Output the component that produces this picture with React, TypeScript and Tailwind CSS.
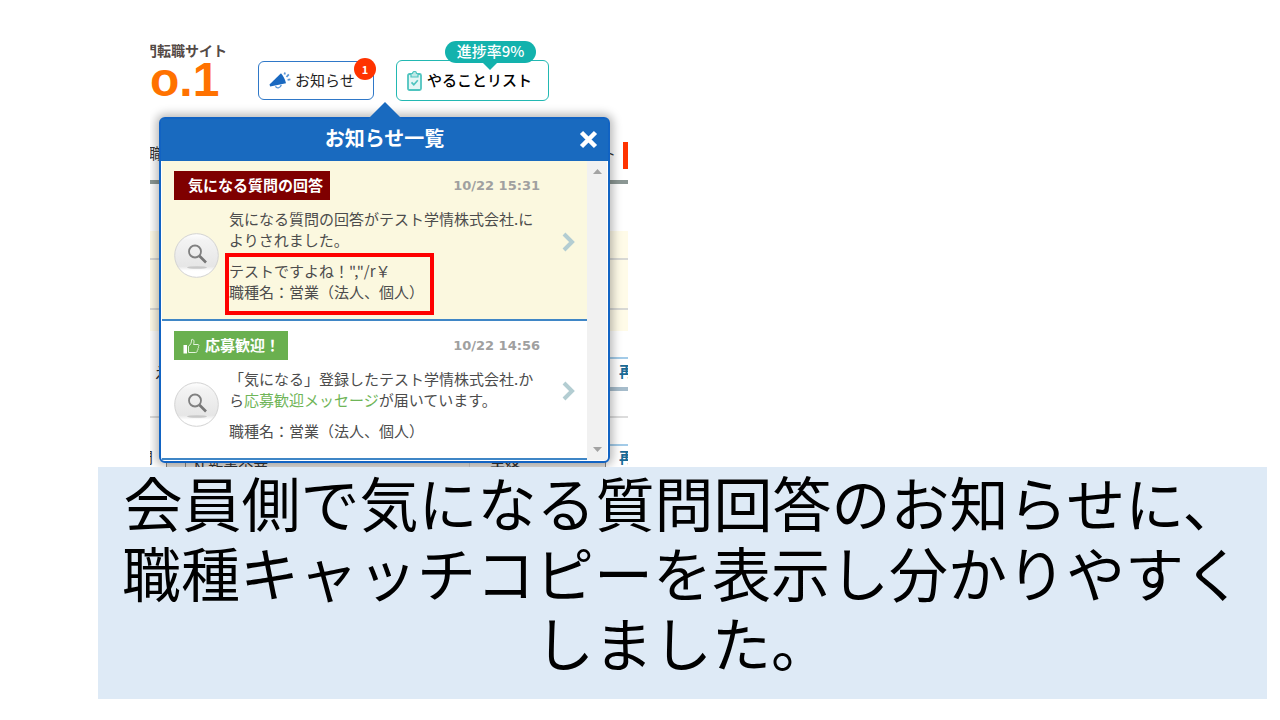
import type { ReactNode } from 'react';

function MegaphoneIcon() {
  return (
    <svg width="22" height="18" viewBox="0 0 22 18" fill="none" aria-hidden="true">
      <path d="M0.500 12.600 12 1.200c2 2.200 4.300 6.200 5 10L1.200 14.600z" fill="#1968c0" />
      <path d="M6.500 14.200c1 2.400 4.800 2.400 5.800-1.300" stroke="#5a95d6" strokeWidth="1.400" />
      <path
        d="M15.500 2.500 16 0.500M17.500 5l2.300-2.600M18.600 7.800l2.800-.5"
        stroke="#5a95d6"
        strokeWidth="1.800"
      />
    </svg>
  );
}

function ClipboardIcon() {
  return (
    <svg width="15" height="20" viewBox="0 0 15 20" fill="none" aria-hidden="true">
      <rect x="1" y="3" width="13" height="16" rx="1.500" fill="#e4f6f5" stroke="#4fc4bf" strokeWidth="1.800" />
      <path d="M4 2.500h1.500a2 2 0 0 1 4 0H11v3.500H4z" fill="#bfe9e7" stroke="#4fc4bf" strokeWidth="1.200" />
      <path d="m4.500 11.300 2.300 2.400 4-4.400" stroke="#4fc4bf" strokeWidth="1.700" />
    </svg>
  );
}

function ThumbIcon() {
  return (
    <svg width="17" height="16" viewBox="0 0 17 16" fill="none" aria-hidden="true">
      <rect x="0.500" y="7" width="3.500" height="8.500" fill="#fff" />
      <path
        d="M5.500 14.500V8.200c2-1.200 3-3.200 3.200-6.700 2.200-.6 2.900 1.600 1.800 5h4.700c1 .4 1 1.700.1 2.200.5.7.3 1.500-.5 1.900.4.800.1 1.500-.6 1.900.2 1.200-.4 2-1.500 2z"
        stroke="#e3f3dd"
      />
    </svg>
  );
}

function SearchBall() {
  return (
    <svg className="shrink-0" width="45" height="45" viewBox="0 0 45 45" fill="none" aria-hidden="true">
      <defs>
        <linearGradient id="ball" x1="0" y1="0" x2="0" y2="1">
          <stop offset="0" stopColor="#fff" />
          <stop offset="0.150" stopColor="#f3f3f3" />
          <stop offset="0.750" stopColor="#e6e6e6" />
          <stop offset="0.850" stopColor="#fff" />
        </linearGradient>
      </defs>
      <circle cx="22.500" cy="22.500" r="21.800" fill="url(#ball)" stroke="#d3d3d3" />
      <ellipse cx="23" cy="34.500" rx="10" ry="1.300" fill="#c8c8c8" />
      <circle cx="21" cy="18.500" r="6" stroke="#808080" strokeWidth="1.800" />
      <path d="m25.500 23 6.500 6.500" stroke="#777" strokeWidth="2.600" />
    </svg>
  );
}

type NoticeProps = {
  tag: ReactNode;
  tagClass: string;
  date: string;
  className: string;
  children: ReactNode;
};

function Notice({ tag, tagClass, date, className, children }: NoticeProps) {
  return (
    <li className={`flex items-center border-b-2 border-[#3f86c6] pl-3 pt-[10px] pb-[17px] ${className}`}>
      <div className="min-w-0 flex-1">
        <div className="flex items-center justify-between">
          <span className={`flex h-[29px] items-center text-[15px] font-bold text-white ${tagClass}`}>{tag}</span>
          <time className="font-['DejaVu_Sans'] text-[13px] font-bold text-[#a0a0a0]">{date}</time>
        </div>
        <div className="mt-2 flex items-center gap-[10px]">
          <SearchBall />
          <div className="flex-1 space-y-[10px] text-[15px] leading-[21px] text-[#4c4c4c]">{children}</div>
        </div>
      </div>
      <a href="#detail" aria-label="詳細" className="ml-[22px] mr-3 pt-[10px]">
        <svg width="13" height="20" viewBox="0 0 13 20" fill="none" aria-hidden="true">
          <path d="m2 2 8 8-8 8" stroke="#b3cdd2" strokeWidth="4" />
        </svg>
      </a>
    </li>
  );
}

function NoticePanel() {
  return (
    <section
      aria-labelledby="notice-title"
      className="absolute top-[117px] left-[9px] right-[18px] rounded-md border-2 border-[#1163c3] bg-white shadow-[0_0_10px_3px_rgba(0,0,0,0.28)]"
    >
      <svg className="absolute -top-[18px] left-[207px]" width="34" height="18" viewBox="0 0 34 18" aria-hidden="true">
        <path d="M17 1 34 18H0z" fill="#196abf" />
      </svg>
      <header className="relative flex h-[42px] items-center justify-center bg-[#196abf] pb-[5px] text-white">
        <h2 id="notice-title" className="text-xl font-bold">お知らせ一覧</h2>
        <button type="button" aria-label="閉じる" className="absolute right-[10px] top-[11px]">
          <svg width="19" height="19" viewBox="0 0 19 19" fill="none" aria-hidden="true">
            <path d="m2.500 2.500 14 14m0-14-14 14" stroke="#fff" strokeWidth="4.500" />
          </svg>
        </button>
      </header>
      <div className="flex px-px pb-px">
        <ul className="flex-1">
          <Notice tag="気になる質問の回答" tagClass="bg-[#7f0000] pl-[14px] pr-[7px]" date="10/22 15:31" className="bg-[#fbf8df]">
            <p>気になる質問の回答がテスト学情株式会社.によりされました。</p>
            <div className="relative">
              <p>テストですよね！&quot;,&quot;/r￥</p>
              <p>職種名：営業（法人、個人）</p>
              <div className="absolute -left-1 -top-[7px] h-[62px] w-[209px] border-4 border-[#fe0000]" />
            </div>
          </Notice>
          <Notice
            tag={<><ThumbIcon />応募歓迎！</>}
            tagClass="gap-[5px] bg-[#6ab04f] pl-[9px] pr-2"
            date="10/22 14:56"
            className="bg-white"
          >
            <p>
              「気になる」登録したテスト学情株式会社.から
              <a href="#message" className="text-[#6fb558]">応募歓迎メッセージ</a>が届いています。
            </p>
            <p>職種名：営業（法人、個人）</p>
          </Notice>
        </ul>
        <div className="flex w-5 flex-col items-center justify-between bg-[#f1f1f1] py-2">
          <button type="button" aria-label="上へ">
            <svg width="9" height="5" aria-hidden="true"><path d="M0 5 4.500 0 9 5z" fill="#a3a3a3" /></svg>
          </button>
          <button type="button" aria-label="下へ">
            <svg width="9" height="5" aria-hidden="true"><path d="M0 0h9L4.500 5z" fill="#a3a3a3" /></svg>
          </button>
        </div>
      </div>
    </section>
  );
}

function SiteHeader() {
  return (
    <header className="flex h-[126px] items-start">
      <div className="w-[108px] shrink-0 pt-10">
        <p className="-ml-[7px] text-sm leading-5 font-bold whitespace-nowrap text-[#544a46]">門転職サイト</p>
        <p className="font-['Liberation_Sans'] text-5xl leading-10 font-bold text-[#ff7200]">o.1</p>
      </div>
      <button
        type="button"
        className="relative mt-[61px] flex h-[39px] w-[116px] items-center gap-1 rounded-md border border-[#2f78c8] pl-[10px] text-[15px] text-[#222]"
      >
        <MegaphoneIcon />
        お知らせ
        <span className="absolute -right-[3px] -top-1 flex size-[22px] items-center justify-center rounded-full bg-[#ff3300] text-[11px] font-bold text-white">
          1
        </span>
      </button>
      <button
        type="button"
        className="relative ml-[22px] mt-[60px] flex h-[41px] w-[153px] items-center gap-[5px] rounded-md border border-[#22b8b2] pl-[10px] text-[15px] font-medium text-black"
      >
        <ClipboardIcon />
        やることリスト
        <span className="absolute -top-5 left-12 flex h-[22px] w-[91px] items-center justify-center rounded-full bg-[#13b2ad] pb-[2px] text-[15px] text-white">
          進捗率9%
          <svg className="absolute left-[37px] top-[21px]" width="16" height="8" aria-hidden="true">
            <path d="M0 0h16L8 8z" fill="#13b2ad" />
          </svg>
        </span>
      </button>
    </header>
  );
}

// Page content that shows on both sides of the open panel
function PageBehind() {
  return (
    <div className="text-[15px] text-[#333]">
      <div className="flex h-[58px] items-center justify-between border-b-4 border-[#8b9794]">
        <span className="-ml-px">職種</span>
        <span className="flex items-center gap-[7px]">
          ト<i className="mt-1 h-[27px] w-[5px] bg-[#ff3300]" />
        </span>
      </div>
      <div className="h-[47px]" />
      <div className="bg-[#fffbe8]">
        <div className="h-[29px] border-b-2 border-[#d8d8d4]" />
        <div className="h-[50px] border-b-2 border-[#d8d8d4]" />
        <div className="h-[21px]" />
      </div>
      <div className="flex h-[60px] items-end justify-between">
        <span className="ml-1 flex h-[34px] items-center pb-1">え</span>
        <div className="flex h-[34px] w-[90px] items-center justify-end overflow-hidden border-t-2 border-b-4 border-t-[#a3cbe8] border-b-[#a6bccb] pb-1">
          <span className="-mr-[6px] font-bold text-[#1a6a96]">再</span>
        </div>
      </div>
      <div className="h-[27px] border-b-2 border-[#dcdcdc]" />
      <div className="h-[26px]" />
      <div className="flex h-[23px] justify-between overflow-hidden">
        <span className="-ml-3 w-7 shrink-0 pt-[2px]">門</span>
        <div className="flex h-12 flex-1 border-x border-[#888] bg-[#e4e2df] pl-[18px] pt-3">
          <div className="flex-1 border-l border-[#888] pl-2">N 新着企業</div>
          <div className="w-[136px] border-l border-[#ccc] pl-5 font-medium">未経</div>
        </div>
        <div className="flex w-[22px] shrink-0 justify-end border-t-2 border-[#a3cbe8]">
          <span className="-mr-[6px] font-bold text-[#1a6a96]">再</span>
        </div>
      </div>
    </div>
  );
}

export default function App() {
  return (
    <main className="min-h-screen bg-white pb-5 font-['Noto_Sans_CJK_JP',sans-serif]">
      <div className="relative ml-[150px] h-[467px] max-w-[478px] overflow-hidden">
        <SiteHeader />
        <PageBehind />
        <NoticePanel />
      </div>
      <p className="ml-[98px] mr-[13px] bg-[#deeaf6] px-5 pb-[22px] text-center text-[59px] leading-[70px] text-black">
        会員側で気になる質問回答のお知らせに、職種キャッチコピーを表示し分かりやすくしました。
      </p>
    </main>
  );
}
